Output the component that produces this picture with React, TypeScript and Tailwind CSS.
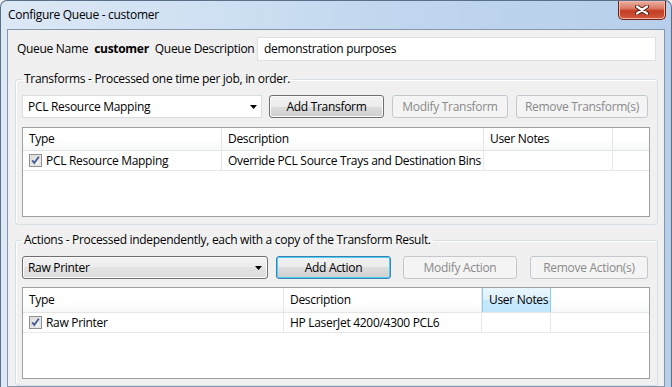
import React from "react";

type Col = { label: string; w: string; hot?: boolean };

function CheckBox() {
  return (
    <svg width="13" height="13" viewBox="0 0 13 13" className="shrink-0">
      <defs>
        <linearGradient id="cbg" x1="0" y1="0" x2="1" y2="1">
          <stop offset="0" stopColor="#dcdcdc" />
          <stop offset="1" stopColor="#fbfbfb" />
        </linearGradient>
      </defs>
      <rect x="0.5" y="0.5" width="12" height="12" fill="#f4f4f4" stroke="#8e8f8f" />
      <rect x="2" y="2" width="9" height="9" fill="url(#cbg)" stroke="#c9c9c9" strokeWidth="0.6" />
      <path d="M3.2 6.4 L5.3 8.9 L9.8 2.8" fill="none" stroke="#4b5f92" strokeWidth="1.9" />
    </svg>
  );
}

function Arrow() {
  return (
    <svg width="7" height="4" viewBox="0 0 7 4" className="shrink-0">
      <path d="M0 0 H7 L3.5 4 Z" fill="#000" />
    </svg>
  );
}

function Combo({ text, w, focused }: { text: string; w: string; focused?: boolean }) {
  return (
    <div
      className={
        focused
          ? `${w} h-[23px] flex items-center justify-between pl-[5px] pr-[5px] rounded-[3px] border border-[#707070] bg-[linear-gradient(#f3f3f3,#ececec_50%,#e3e3e3_50%,#dcdcdc)] shadow-[inset_0_0_0_1px_#fcfcfc]`
          : `${w} h-[23px] flex items-center justify-between pl-[5px] pr-[4px] border border-[#dadde2] bg-white`
      }
    >
      <span className="leading-[16px]">{text}</span>
      <Arrow />
    </div>
  );
}

function Btn({ label, w, kind }: { label: string; w: string; kind: "normal" | "default" | "disabled" }) {
  const styles = {
    normal:
      "border border-[#707070] bg-[linear-gradient(#f2f2f2,#ebebeb_50%,#dddddd_50%,#cfcfcf)] shadow-[inset_0_0_0_1px_#fafafa] text-black",
    default:
      "border border-[#3c7fb1] bg-[linear-gradient(#f2f2f2,#ebebeb_50%,#dddddd_50%,#cfcfcf)] shadow-[inset_0_0_0_1px_#48d0f8] text-black",
    disabled: "border border-[#c4c8cc] bg-[#f4f4f4] text-[#8a8a8a]",
  };
  return (
    <div className={`${w} h-[23px] rounded-[3px] flex items-center justify-center leading-[16px] ${styles[kind]}`}>
      {label}
    </div>
  );
}

function Table({ cols, cells, h, headH }: { cols: Col[]; cells: string[]; h: string; headH: string }) {
  return (
    <div className={`${h} border border-[#a0a0a0] bg-white flex flex-col`}>
      <div className={`${headH} flex border-b border-[#e5e5e5] bg-[linear-gradient(#ffffff,#ffffff_55%,#f6f7f8)]`}>
        {cols.map((c) => (
          <div
            key={c.label}
            className={
              c.hot
                ? `${c.w} shrink-0 flex items-center pl-[6px] border-x border-[#8ccbed] bg-[linear-gradient(#e9f6fd,#dcf0fc_50%,#c5e8fc_50%,#c2e6fa)]`
                : `${c.w} shrink-0 flex items-center pl-[6px] border-r border-[#e5e5e5]`
            }
          >
            <span className="leading-[16px]">{c.label}</span>
          </div>
        ))}
        <div className="flex-1" />
      </div>
      <div className="h-[20px] flex border-b border-[#e8e8e8]">
        {cols.map((c, i) => (
          <div key={c.label} className={`${c.w} shrink-0 overflow-hidden flex items-center pl-[6px] border-r border-[#e8e8e8]`}>
            {i === 0 && (
              <span className="mr-[4px] flex">
                <CheckBox />
              </span>
            )}
            <span className="leading-[16px]">{cells[i]}</span>
          </div>
        ))}
        <div className="flex-1" />
      </div>
    </div>
  );
}

export default function App() {
  return (
    <div className="w-[672px] h-[387px] overflow-hidden whitespace-nowrap bg-[#f0f0f0] font-['Open_Sans','Liberation_Sans',sans-serif] text-[12px] tracking-[-0.3px] text-black">
      <div className="h-full flex flex-col px-[6px] rounded-t-[7px] border border-b-0 border-[#5b6f88] bg-[linear-gradient(90deg,#dce8f5,#cddff2_35%,#c0d6ee_60%,#b7cfea)]">
        <div className="h-[28px] flex justify-between">
          <span className="pl-[1px] pt-[6px] leading-[16px]">Configure Queue - customer</span>
          <div className="w-[48px] h-[19px] -mr-[1px] rounded-b-[5px] border border-t-0 border-[#6e2414] bg-[linear-gradient(#eab1a2,#dc7b66_40%,#c43d22_55%,#d05a3f)] shadow-[inset_0_0_0_1px_#f1b8a8] flex items-center justify-center">
            <svg width="14" height="10" viewBox="0 0 14 10">
              <path d="M2 1.5 L12 8.5 M12 1.5 L2 8.5" stroke="#4a1a10" strokeWidth="4" strokeLinecap="round" />
              <path d="M2 1.5 L12 8.5 M12 1.5 L2 8.5" stroke="#ffffff" strokeWidth="2.2" strokeLinecap="round" />
            </svg>
          </div>
        </div>

        <div className="flex-1 border border-[#8497ae] bg-[#f0f0f0] flex flex-col">
          <div className="mt-[7px] h-[24px] flex items-center pl-[9px] pr-[8px]">
            <span className="leading-[16px]">Queue Name</span>
            <span className="ml-[6px] font-bold leading-[16px]">customer</span>
            <span className="ml-[6px] leading-[16px]">Queue Description</span>
            <div className="ml-auto w-[399px] shrink-0 h-[24px] border border-[#dde1e6] bg-white flex items-center pl-[6px]">
              <span className="leading-[16px]">demonstration purposes</span>
            </div>
          </div>

          <fieldset className="mt-[10px] ml-[7px] mr-[6px] pl-[6px] pr-[7px] pb-[7px] border border-[#d5dfe5] rounded-[3px] shadow-[inset_1px_1px_0_#ffffff]">
            <legend className="px-[2px] leading-[16px]">Transforms - Processed one time per job, in order.</legend>
            <div className="pt-[8px] flex">
              <Combo text="PCL Resource Mapping" w="w-[240px]" />
              <div className="ml-[7px]">
                <Btn label="Add Transform" w="w-[115px]" kind="normal" />
              </div>
              <div className="ml-[8px]">
                <Btn label="Modify Transform" w="w-[116px]" kind="disabled" />
              </div>
              <div className="ml-[8px]">
                <Btn label="Remove Transform(s)" w="w-[132px]" kind="disabled" />
              </div>
            </div>
            <div className="mt-[9px]">
              <Table
                h="h-[90px]"
                headH="h-[23px]"
                cols={[
                  { label: "Type", w: "w-[199px]" },
                  { label: "Description", w: "w-[262px]" },
                  { label: "User Notes", w: "w-[129px]" },
                ]}
                cells={["PCL Resource Mapping", "Override PCL Source Trays and Destination Bins", ""]}
              />
            </div>
          </fieldset>

          <fieldset className="mt-[7px] ml-[7px] mr-[6px] pl-[6px] pr-[7px] pb-[6px] border border-[#d5dfe5] rounded-[3px] shadow-[inset_1px_1px_0_#ffffff]">
            <legend className="px-[2px] leading-[16px]">Actions - Processed independently, each with a copy of the Transform Result.</legend>
            <div className="pt-[8px] flex">
              <Combo text="Raw Printer" w="w-[246px]" focused />
              <div className="ml-[8px]">
                <Btn label="Add Action" w="w-[115px]" kind="default" />
              </div>
              <div className="ml-[12px]">
                <Btn label="Modify Action" w="w-[114px]" kind="disabled" />
              </div>
              <div className="ml-[13px]">
                <Btn label="Remove Action(s)" w="w-[118px]" kind="disabled" />
              </div>
            </div>
            <div className="mt-[8px]">
              <Table
                h="h-[92px]"
                headH="h-[25px]"
                cols={[
                  { label: "Type", w: "w-[261px]" },
                  { label: "Description", w: "w-[198px]" },
                  { label: "User Notes", w: "w-[69px]", hot: true },
                ]}
                cells={["Raw Printer", "HP LaserJet 4200/4300 PCL6", ""]}
              />
            </div>
          </fieldset>
        </div>
      </div>
    </div>
  );
}
